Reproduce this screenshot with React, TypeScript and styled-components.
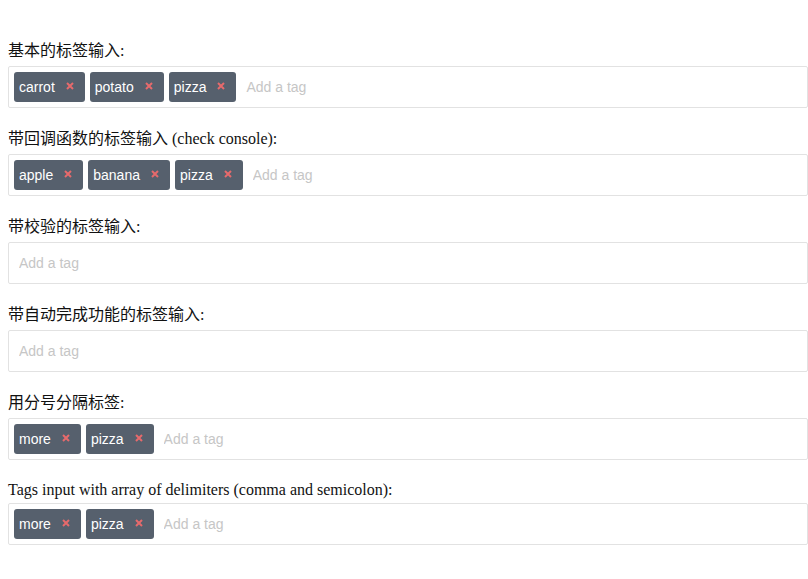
import React from "react";
import styled, { createGlobalStyle } from "styled-components";

const Global = createGlobalStyle`
  html, body { margin: 0; padding: 0; background: #fff; overflow: hidden; }
  body { font-family: "Liberation Serif", "Noto Sans CJK SC", serif; color: #111; }
`;

const Page = styled.div`
  width: 800px;
  padding: 40px 0 0 8px;
`;

const Block = styled.section`
  margin-bottom: 20px;
`;

const Label = styled.div<{ $latin?: boolean }>`
  font-size: 16px;
  line-height: ${(p) => (p.$latin ? "19px" : "22px")};
  margin-bottom: 4px;
  white-space: nowrap;
`;

const Box = styled.div`
  box-sizing: border-box;
  width: 800px;
  height: 42px;
  border: 1px solid #e2e2e2;
  border-radius: 2px;
  padding: 5px;
  display: flex;
  align-items: center;
  gap: 5px;
  background: #fff;
`;

const Chip = styled.span`
  display: inline-flex;
  align-items: center;
  height: 30px;
  padding-left: 5px;
  background: #56606d;
  color: #fff;
  border-radius: 3px;
  font-family: "Liberation Sans", Arial, sans-serif;
  font-size: 14px;
  line-height: 30px;
`;

const Remove = styled.span`
  display: inline-flex;
  align-items: center;
  justify-content: center;
  width: 30px;
  height: 30px;
  padding-bottom: 3px;
  box-sizing: border-box;
  cursor: pointer;
`;

const Input = styled.input`
  border: none;
  outline: none;
  flex: 1;
  height: 30px;
  padding: 0 5px;
  font-family: "Liberation Sans", Arial, sans-serif;
  font-size: 14px;
  color: #333;
  background: transparent;
  &::placeholder { color: #c6c6c6; }
`;

const Cross = () => (
  <svg width="8" height="8" viewBox="0 0 8 8">
    <path d="M1 1 L7 7 M7 1 L1 7" stroke="#e66a6c" strokeWidth="2" strokeLinecap="butt" />
  </svg>
);

const TagsInput = ({ tags }: { tags: string[] }) => (
  <Box>
    {tags.map((t) => (
      <Chip key={t}>
        {t}
        <Remove>
          <Cross />
        </Remove>
      </Chip>
    ))}
    <Input placeholder="Add a tag" />
  </Box>
);

const sections: { label: string; tags: string[]; latin?: boolean }[] = [
  { label: "基本的标签输入:", tags: ["carrot", "potato", "pizza"] },
  { label: "带回调函数的标签输入 (check console):", tags: ["apple", "banana", "pizza"] },
  { label: "带校验的标签输入:", tags: [] },
  { label: "带自动完成功能的标签输入:", tags: [] },
  { label: "用分号分隔标签:", tags: ["more", "pizza"] },
  { label: "Tags input with array of delimiters (comma and semicolon):", tags: ["more", "pizza"], latin: true },
];

export default function App() {
  return (
    <>
      <Global />
      <Page>
        {sections.map((s) => (
          <Block key={s.label}>
            <Label $latin={s.latin}>{s.label}</Label>
            <TagsInput tags={s.tags} />
          </Block>
        ))}
      </Page>
    </>
  );
}
